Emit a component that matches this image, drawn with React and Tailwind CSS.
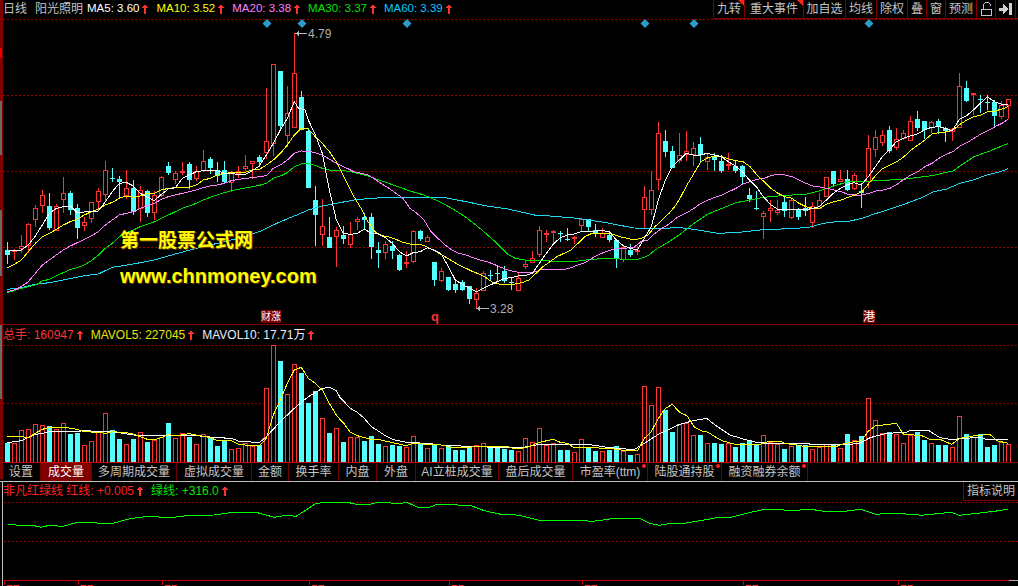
const RED = '#ff3232';
const CYAN = '#54ffff';
const DARK = '#800000';

// candles: [kind, bodyTop, bodyBottom, high, low], y read off the 3x crops
const candles = [
  ['c',420,434,396,462],['r',420,424,418,450],['r',408,413,376,430],['r',342,406,340,430],['r',294,326,286,350],
  ['r',256,286,240,310],['c',288,354,250,360],['r',288,360,282,362],['r',250,268,202,310],['c',249,300,243,316],
  ['c',294,353,282,387],['r',337,346,320,362],['r',277,326,275,340],['r',244,275,234,300],['r',181,253,153,272],
  ['c',203,205,174,215],['c',208,216,198,265],['r',234,255,181,266],['c',234,306,210,315],['r',240,293,228,335],
  ['c',243,309,240,320],['r',256,307,244,330],['r',202,256,198,262],['c',168,189,155,195],['r',190,208,182,222],
  ['r',182,184,155,195],['c',162,210,155,237],['r',184,205,168,214],['r',154,182,121,185],['c',147,175,142,192],
  ['c',181,200,156,215],['c',181,217,153,222],['r',190,217,183,247],['r',183,190,168,205],['r',169,175,136,182],
  ['r',154,160,154,208],['c',141,155,135,170],['r',94,128,-66,148],['r',-138,100,-138,138],['c',-117,48,-117,60],
  ['r',10,75,-72,110],['r',-111,52,-231,52],['c',-39,60,-58,60],['c',62,233,55,233],['c',270,315,228,408],
  ['r',349,374,268,408],['c',381,413,321,413],['r',361,380,350,472],
  ['c',375,386,348,402],['r',371,401,336,413],['r',328,334,322,360],['c',322,330,310,360],['c',322,413,310,446],
  ['c',420,428,396,473],['r',403,428,392,446],['c',408,422,392,446],['c',435,480,432,482],['r',456,458,424,473],
  ['r',364,455,360,460],['c',363,388,360,392],['r',382,394,376,396],['c',456,510,456,527],['r',484,510,475,515],
  ['c',501,540,501,542],['c',522,540,510,548],['c',517,540,510,542],['c',529,569,528,582],['r',550,568,535,595],
  ['r',490,540,484,540],['c',495,498,480,510],['c',489,491,468,515],['c',484,514,468,520],['c',517,521,505,540],
  ['r',503,538,490,540],['r',462,467,450,478],['r',443,455,424,460],['r',361,434,348,441],['r',369,372,360,396],
  ['r',364,365,360,402],['c',370,374,362,396],['c',387,389,354,392],['r',381,385,378,402],['r',328,347,327,364],
  ['c',328,353,327,364],['c',361,373,342,380],['r',369,380,355,380],['c',375,390,372,395],['c',391,445,391,473],
  ['r',410,445,405,456],['c',420,435,403,440],['r',420,422,408,436],['r',262,298,228,358],['r',241,298,183,315],
  ['r',70,208,36,240],['c',94,128,60,140],['c',123,174,108,174],['r',136,152,70,160],
];
const candles2 = [
  ['r',274,283,213,303],['r',265,284,246,318],['c',252,285,231,306],['r',292,305,280,330],['c',292,302,280,333],
  ['c',303,333,285,339],['r',311,314,280,330],['c',318,333,303,339],['c',318,351,315,372],['c',405,417,385,426],
  ['c',444,446,393,450],['r',460,470,453,537],['r',445,452,420,486],['r',451,458,420,465],['c',426,452,411,471],
  ['r',420,471,417,477],['c',448,471,445,480],['c',444,452,411,468],['r',438,486,426,504],['r',420,444,399,448],
  ['r',352,410,352,412],['c',334,373,334,378],['r',358,364,330,366],['c',357,390,331,393],['r',345,384,339,390],
  ['c',393,400,370,444],['r',265,365,225,385],['r',232,268,210,291],['r',225,245,210,258],['c',210,273,198,280],
  ['r',238,262,204,270],['r',220,236,210,240],['r',184,241,167,242],['c',178,204,153,213],['c',184,211,184,237],
  ['r',187,202,184,220],['c',184,202,178,222],['c',204,213,200,246],['r',208,213,205,243],['r',79,202,40,204],
  ['c',85,123,63,126],['r',100,104,100,166],['c',118,120,106,160],['c',125,127,105,150],['c',127,170,120,203],
  ['r',136,170,124,177],['r',118,136,118,177],
];

const allCandles = [
  ...candles.map((c) => [c[0], 110 + c[1] / 3, 110 + c[2] / 3, 110 + c[3] / 3, 110 + c[4] / 3]),
  ...candles2.map((c) => [c[0], 60 + c[1] / 3, 60 + c[2] / 3, 60 + c[3] / 3, 60 + c[4] / 3]),
];

// volume bars: r/c and the top in crop y
const volumes = 'c353 r355 r316 r313 r298 r300 c304 r313 r295 c327 c324 r361 r349 r322 r265 c316 c342 r358 c342 r322 c351 r345 r337 c294 r340 r325 c335 r358 r328 c338 c363 c347 r373 r370 r355 r363 c360 r190 r61 c108 r208 r118 c144 c234 c198 r280 c324 r310 c351 r337 r337 c348 c333 c357 r364 c360 c363 r367 r334 c358 r370 c358 r370 c363 c375 c375 c363 r361 r355 c367 c367 c372 c375 r379 r340 r352 r310 r361 r355 c375 c375 r382 r343 c367 c378 r379 c375 c363 r379 c390 r388 r184 r241 r187 c255 c321 r298 r295 r331 c330 r355 c354 c357 r355 c366 c354 c345 c357 r331 r352 r358 c372 r364 c360 c360 r373 r367 r358 c358 r370 c327 r346 c333 r220 r286 r325 c321 r327 r355 r331 c321 c345 r355 c360 c360 r367 r274 c327 r337 c328 c366 c360 r351 r358'
  .split(' ')
  .map((s) => [s[0], 325 + Number(s.slice(1)) / 3]);

const pts = (x0, y0, list) => list.map(([x, y]) => `${x0 + x / 3},${y0 + y / 3}`).join(' ');
const line = (...parts) => parts.join(' ');

const ma5 = line(
  pts(0, 110, [[22,425],[43,420],[64,420],[85,405],[106,378],[127,345],[148,310],[169,295],[190,290],[211,288],[232,308],[253,306],[274,305],[295,303],[316,275],[337,245],[358,220],[379,217],[400,228],[421,250],[442,262],[463,272],[484,253],[505,237],[526,233],[547,205],[568,195],[589,185],[610,182],[631,180],[652,182],[673,190],[694,191],[715,193],[736,193],[757,182],[778,168],[799,135],[820,100],[841,60],[862,25],[883,-25],[895,-6],[915,0],[925,30],[946,75],[967,130],[988,240],[1009,330]]),
  pts(340, 110, [[0,350],[10,370],[31,373],[52,370],[73,357],[94,370],[115,372],[136,383],[157,400],[178,425],[199,438],[220,428],[241,425],[262,413],[283,420],[304,432],[325,470],[346,510],[367,523],[388,535],[409,545],[430,535],[451,525],[472,515],[493,505],[514,503],[535,498],[556,497],[577,490],[598,460],[619,430],[640,402],[661,383],[682,375],[703,372],[724,365],[745,363],[766,363],[787,362],[808,365],[829,390],[850,407],[871,415],[892,420],[913,385],[934,350],[955,270],[976,210],[997,170]]),
  pts(680, 60, [[0,298],[19,280],[40,285],[61,285],[82,280],[103,285],[124,290],[145,305],[166,318],[187,335],[208,360],[229,380],[250,410],[271,433],[292,447],[313,450],[334,447],[355,447],[376,450],[397,445],[418,440],[439,420],[460,400],[481,385],[502,375],[523,368],[544,375],[565,350],[586,320],[607,290],[628,270],[649,245],[670,235],[691,228],[712,222],[733,210],[754,202],[775,200],[796,205],[817,212],[838,178],[859,168],[880,150],[901,130],[922,110],[943,125],[964,132],[985,135]]),
);
const ma10 = line(
  pts(0, 110, [[22,474],[43,463],[64,450],[85,425],[106,400],[127,380],[148,370],[169,358],[190,345],[211,335],[232,327],[253,315],[274,305],[295,297],[316,285],[337,277],[358,265],[379,258],[400,262],[421,258],[442,250],[463,250],[484,240],[505,235],[526,233],[547,233],[568,232],[589,225],[610,210],[631,205],[652,195],[673,190],[694,188],[715,187],[736,187],[757,180],[778,178],[799,165],[820,150],[841,130],[862,105],[883,75],[904,55],[925,57],[946,80],[967,100],[988,125],[1009,155]]),
  pts(340, 110, [[0,178],[21,220],[42,260],[63,295],[84,335],[105,365],[126,377],[147,381],[168,388],[189,397],[210,402],[231,402],[252,406],[273,417],[294,428],[315,440],[336,453],[357,465],[378,475],[399,485],[420,493],[441,505],[462,520],[483,523],[504,525],[525,522],[546,518],[567,510],[588,490],[609,470],[630,455],[651,440],[672,430],[693,420],[714,400],[735,380],[756,370],[777,370],[798,370],[819,373],[840,380],[861,385],[882,390],[903,385],[924,375],[945,350],[966,330],[987,310],[1008,285]]),
  pts(680, 60, [[0,415],[21,375],[42,340],[63,305],[84,293],[105,288],[126,290],[147,297],[168,302],[189,305],[210,320],[231,345],[252,365],[273,385],[294,400],[315,410],[336,415],[357,430],[378,440],[399,445],[420,444],[441,432],[462,425],[483,420],[504,412],[525,405],[546,395],[567,370],[588,345],[609,325],[630,315],[651,305],[672,290],[693,270],[714,255],[735,240],[756,222],[777,218],[798,216],[819,210],[840,193],[861,180],[882,170],[903,165],[924,155],[945,153],[966,147],[985,140]]),
);
const ma20 = line(
  pts(0, 110, [[22,545],[43,540],[64,530],[85,515],[106,490],[127,465],[148,450],[169,435],[190,420],[211,408],[232,398],[253,388],[274,378],[295,365],[316,345],[337,330],[358,315],[379,310],[400,305],[421,295],[442,287],[463,280],[484,268],[505,260],[526,255],[547,250],[568,245],[589,240],[610,233],[631,228],[652,225],[673,220],[694,212],[715,208],[736,205],[757,203],[778,200],[799,197],[820,175],[841,165],[862,150],[883,130],[904,123],[925,124],[946,128],[967,135],[988,147],[1009,160]]),
  pts(340, 110, [[0,165],[21,175],[42,185],[63,190],[84,195],[105,208],[126,222],[147,235],[168,250],[189,265],[210,295],[231,310],[252,330],[273,365],[294,385],[315,405],[336,420],[357,430],[378,435],[399,443],[420,450],[441,455],[462,463],[483,472],[504,480],[525,485],[546,488],[567,488],[588,485],[609,477],[630,477],[651,478],[672,479],[693,473],[714,465],[735,458],[756,445],[777,433],[798,425],[819,418],[840,415],[861,414],[882,412],[903,395],[924,390],[945,370],[966,355],[987,342],[1008,325]]),
  pts(680, 60, [[0,468],[21,458],[42,445],[63,430],[84,420],[105,412],[126,405],[147,395],[168,385],[189,372],[210,365],[231,358],[252,355],[273,347],[294,343],[315,345],[336,350],[357,360],[378,370],[399,378],[420,381],[441,385],[462,390],[483,395],[504,403],[525,405],[546,405],[567,400],[588,393],[609,390],[630,385],[651,373],[672,358],[693,345],[714,335],[735,320],[756,310],[777,295],[798,283],[819,275],[840,258],[861,248],[882,235],[903,222],[924,212],[945,200],[966,190],[985,177]]),
);
const ma30 = line(
  pts(0, 110, [[22,547],[43,542],[64,535],[85,530],[106,525],[127,513],[148,508],[169,497],[190,488],[211,478],[232,473],[253,465],[274,452],[295,435],[316,415],[337,400],[358,380],[379,368],[400,360],[421,350],[442,343],[463,335],[484,325],[505,315],[526,305],[547,295],[568,288],[589,280],[610,270],[631,262],[652,255],[673,248],[694,242],[715,238],[736,234],[757,230],[778,226],[799,220],[820,205],[841,198],[862,188],[883,170],[904,162],[925,161],[946,166],[967,175],[988,180]]),
  pts(340, 110, [[0,180],[42,187],[84,198],[126,213],[168,228],[210,243],[252,255],[294,273],[336,295],[378,322],[420,355],[462,392],[483,412],[504,433],[525,445],[567,452],[609,452],[672,455],[714,453],[756,448],[798,445],[861,448],[893,449],[925,437],[945,420],[987,395]]),
  pts(680, 60, [[0,523],[42,490],[84,462],[126,445],[168,428],[210,420],[252,412],[294,408],[336,405],[378,403],[420,392],[462,378],[504,365],[546,366],[588,362],[630,360],[672,358],[714,352],[756,347],[798,337],[819,333],[840,318],[882,290],[924,275],[966,258],[985,250]]),
);
const ma60 = line(
  pts(0, 110, [[22,538],[64,533],[106,523],[148,518],[190,510],[253,497],[295,492],[337,472],[400,462],[463,450],[526,432],[589,415],[652,400],[715,385],[778,365],[841,335],[883,318],[925,300],[967,288]]),
  pts(340, 110, [[0,278],[42,270],[84,266],[126,263],[210,262],[252,262],[315,263],[378,275],[441,288],[504,297],[588,316],[630,318],[714,325],[798,338],[882,354],[960,355]]),
  pts(680, 60, [[0,503],[42,508],[84,515],[115,520],[178,517],[240,510],[303,507],[345,505],[387,502],[430,490],[470,485],[510,483],[546,475],[580,463],[630,447],[680,430],[720,415],[760,395],[800,387],[840,370],[880,360],[920,345],[960,335],[985,326]]),
);

const volMa5 = line(
  pts(0, 325, [[22,335],[64,335],[85,338],[106,325],[127,313],[148,307],[190,306],[232,313],[253,320],[295,322],[316,325],[337,320],[379,323],[400,327],[421,335],[442,343],[463,344],[484,338],[505,328],[526,333],[567,326],[589,330],[631,338],[652,347],[694,347],[715,357],[736,360],[778,363],[799,340],[820,270],[841,225],[862,175],[883,135],[904,127],[925,160],[946,175],[967,195],[988,235],[1009,270]]),
  pts(340, 325, [[0,283],[10,293],[31,322],[52,332],[73,338],[94,343],[115,343],[136,348],[157,353],[199,362],[220,355],[262,358],[304,360],[335,367],[378,368],[400,365],[504,365],[525,372],[546,370],[567,365],[598,352],[640,343],[661,352],[682,355],[703,368],[745,368],[808,370],[850,376],[892,378],[913,340],[934,320],[955,280],[976,250],[997,238]]),
  pts(680, 325, [[0,263],[21,272],[42,305],[63,317],[84,322],[105,335],[126,347],[165,358],[240,358],[264,350],[305,350],[315,356],[340,358],[370,364],[470,364],[495,355],[545,347],[565,318],[586,303],[640,296],[650,296],[670,327],[725,332],[750,343],[780,343],[815,358],[840,340],[880,333],[930,328],[950,347],[985,355]]),
);
const volMa10 = line(
  pts(0, 325, [[22,353],[64,347],[106,328],[127,325],[148,320],[232,320],[253,316],[295,320],[337,320],[400,330],[463,332],[526,332],[589,332],[652,338],[694,340],[715,348],[778,353],[799,335],[841,290],[883,250],[925,215],[967,190],[988,187],[1009,197]]),
  pts(340, 325, [[0,217],[31,250],[52,262],[73,280],[94,305],[115,318],[136,332],[157,343],[199,352],[262,355],[304,360],[356,362],[378,365],[504,367],[546,368],[588,360],[640,358],[756,360],[808,368],[882,374],[913,355],[955,328]]),
  pts(680, 325, [[0,298],[40,287],[80,280],[105,300],[150,330],[190,342],[230,352],[262,355],[385,355],[390,358],[490,360],[540,355],[570,338],[620,325],[680,322],[690,316],[745,316],[780,338],[820,345],[840,340],[900,338],[925,345],[985,343]]),
);
const greenLine = line(
  pts(0, 455, [[22,208],[55,211],[95,211],[120,217],[145,211],[185,214],[230,202],[285,202],[290,205],[335,205],[380,193],[412,187],[455,184],[500,189],[565,181],[640,180],[695,172],[765,172],[820,187],[855,181],[885,184],[915,165],[945,145],[980,142],[1040,142],[1065,148],[1105,148],[1130,142],[1190,145],[1220,143],[1250,157],[1285,157],[1310,147],[1410,152],[1450,167],[1500,178]]),
  pts(510, 455, [[0,178],[30,182],[85,196],[200,196],[245,199],[290,193],[315,190],[385,190],[415,205],[445,211],[480,205],[520,205],[625,187],[660,187],[720,172],[760,163],[850,166],[900,163],[940,169],[1000,169],[1050,163],[1095,178],[1130,175],[1210,178],[1230,181],[1320,172],[1345,181],[1450,169],[1490,163]]),
);

const toolbar = [
  { label: '九转', w: 'w-[31px]', corner: true },
  { label: '重大事件', w: 'w-[59px]', corner: true },
  { label: '加自选', w: 'w-[42px]' },
  { label: '均线', w: 'w-[31px]' },
  { label: '除权', w: 'w-[31px]' },
  { label: '叠', w: 'w-[19px]' },
  { label: '窗', w: 'w-[19px]' },
  { label: '预测', w: 'w-[31px]' },
];

const tabs = [
  { label: '设置', w: 'w-[39px]' },
  { label: '成交量', w: 'w-[51px]', active: true },
  { label: '多周期成交量', w: 'w-[85px]' },
  { label: '虚拟成交量', w: 'w-[75px]' },
  { label: '金额', w: 'w-[37px]' },
  { label: '换手率', w: 'w-[50px]' },
  { label: '内盘', w: 'w-[38px]' },
  { label: '外盘', w: 'w-[39px]' },
  { label: 'AI立桩成交量', w: 'w-[83px]' },
  { label: '盘后成交量', w: 'w-[74px]' },
  { label: '市盈率(ttm)', w: 'w-[75px]', dot: true },
  { label: '陆股通持股', w: 'w-[74px]', dot: true },
  { label: '融资融券余额', w: 'w-[86px]', dot: true },
];

const dates = [
  { x: 3, label: '77' },
  { x: 77, label: '75' },
  { x: 161, label: '75' },
  { x: 308, label: '57' },
  { x: 448, label: '75' },
  { x: 581, label: '77' },
  { x: 742, label: '77' },
  { x: 897, label: '75' },
];

const edge = [
  [0, 48, DARK], [48, 10, '#e00000'], [58, 43, DARK], [101, 54, '#6a6a6a'], [155, 55, DARK],
  [210, 66, '#6a6a6a'], [276, 48, DARK], [325, 75, '#6a6a6a'], [400, 80, DARK],
];

function UpArrow() {
  return (
    <svg width="6" height="10" viewBox="0 0 6 10" shapeRendering="crispEdges" className="shrink-0">
      <polygon points="3,0 6,4 4,4 4,10 2,10 2,4 0,4" fill={RED} />
    </svg>
  );
}

function Value({ label, className }) {
  return (
    <div className={`flex items-center gap-[3px] ${className}`}>
      <span className="whitespace-nowrap">{label}</span>
      <UpArrow />
    </div>
  );
}

function Dotted({ y }) {
  return <line x1="3" x2="1018" y1={y + 0.5} y2={y + 0.5} stroke="#a00000" strokeDasharray="2 2" />;
}

function MainChart() {
  return (
    <svg width="1018" height="306" viewBox="0 19 1018 306" shapeRendering="crispEdges" className="block">
      <Dotted y={19} />
      <Dotted y={95} />
      <Dotted y={171} />
      <Dotted y={247} />
      {[267, 302, 407, 645, 694, 869].map((x) => (
        <polygon key={x} points={`${x},19 ${x + 4.5},23.5 ${x},28 ${x - 4.5},23.5`} fill="#2f9ac6" shapeRendering="auto" />
      ))}
      {allCandles.map(([kind, top, bottom, hi, lo], i) => {
        const cx = 7.5 + 7 * i;
        const color = kind === 'r' ? RED : CYAN;
        return (
          <g key={i}>
            <line x1={cx} x2={cx} y1={hi} y2={lo} stroke={color} />
            {kind === 'r' ? (
              <rect x={cx - 2} y={Math.round(top) + 0.5} width="4" height={Math.max(1, Math.round(bottom - top))} fill="#000" stroke={color} />
            ) : (
              <rect x={cx - 2.5} y={Math.round(top)} width="5" height={Math.max(1, Math.round(bottom - top))} fill={color} />
            )}
          </g>
        );
      })}
      <polyline points={ma60} fill="none" stroke="#1fd6f2" />
      <polyline points={ma30} fill="none" stroke="#00e000" />
      <polyline points={ma20} fill="none" stroke="#ff80ff" />
      <polyline points={ma10} fill="none" stroke="#ffff00" />
      <polyline points={ma5} fill="none" stroke="#ffffff" />
      <line x1="296" x2="307" y1="33.5" y2="33.5" stroke="#b8b8b8" />
      <polygon points="295,33.5 299,31 299,36" fill="#b8b8b8" />
      <line x1="477" x2="489" y1="308.5" y2="308.5" stroke="#b8b8b8" />
      <polygon points="476,308.5 480,306 480,311" fill="#b8b8b8" />
    </svg>
  );
}

function VolumeChart() {
  return (
    <svg width="1018" height="120" viewBox="0 342 1018 120" shapeRendering="crispEdges" className="block">
      <Dotted y={345} />
      <Dotted y={403} />
      {volumes.map(([kind, top], i) => {
        const x = 5 + 7 * i;
        const y = Math.round(top);
        return kind === 'r' ? (
          <rect key={i} x={x + 0.5} y={y + 0.5} width="4" height={462 - y} fill="#000" stroke={RED} />
        ) : (
          <rect key={i} x={x} y={y} width="5" height={462 - y} fill={CYAN} />
        );
      })}
      <polyline points={volMa10} fill="none" stroke="#ffffff" />
      <polyline points={volMa5} fill="none" stroke="#ffff00" />
    </svg>
  );
}

function SubChart() {
  return (
    <svg width="1016" height="86" viewBox="2 500 1016 86" shapeRendering="crispEdges" className="block">
      <Dotted y={502} />
      <Dotted y={541} />
      <polyline points={greenLine} fill="none" stroke="#00ff00" />
      <line x1="3" x2="1008" y1="580.5" y2="580.5" stroke="#c80000" />
      <line x1="1008" x2="1018" y1="580.5" y2="580.5" stroke="#b0b0b0" />
      {dates.map((d) => (
        <line key={d.x} x1={d.x + 0.5} x2={d.x + 0.5} y1="581" y2="585" stroke="#c80000" />
      ))}
    </svg>
  );
}

export default function App() {
  return (
    <div className="relative flex h-[586px] w-[1018px] flex-col overflow-hidden bg-black font-['Liberation_Sans','Noto_Sans_CJK_SC',sans-serif] text-[12px] leading-none">
      {/* left axis strip */}
      <div className="absolute left-0 top-0 flex h-[480px] w-[3px] flex-col border-r border-[#800000]">
        {edge.map(([y, h, color]) => (
          <div key={y} className="w-full shrink-0" style={{ height: h, backgroundColor: color }} />
        ))}
      </div>

      {/* main pane */}
      <section className="relative h-[325px] shrink-0">
        <header className="flex h-[19px] items-start">
          <div className="flex h-[18px] items-center pl-[3px]">
            <span className="text-[#c4c4c4]">日线</span>
            <span className="ml-[8px] text-[#c4c4c4]">阳光照明</span>
            <div className="ml-[4px] flex gap-2 text-[11.5px]">
              <Value label="MA5: 3.60" className="text-white" />
              <Value label="MA10: 3.52" className="text-[#ffff00]" />
              <Value label="MA20: 3.38" className="text-[#ff80ff]" />
              <Value label="MA30: 3.37" className="text-[#00e600]" />
              <Value label="MA60: 3.39" className="text-[#00ccff]" />
            </div>
          </div>
          <div className="ml-auto flex h-[19px] border-b border-l border-[#800000]">
            {toolbar.map((t) => (
              <div key={t.label} className={`relative flex items-center justify-center border-r border-[#800000] text-[#c4c4c4] ${t.w}`}>
                {t.label}
                {t.corner && <div className="absolute right-0 top-0 h-[6px] w-[6px] bg-[#ff2020] [clip-path:polygon(0_0,100%_0,100%_100%)]" />}
              </div>
            ))}
            <div className="flex w-[19px] items-center justify-center border-r border-[#800000]">
              <svg width="13" height="16" viewBox="0 0 13 16" fill="none" stroke="#c4c4c4" shapeRendering="crispEdges">
                <path d="M1.5 8.5h10v6h-10zM3.5 8V3.5l2-2h3l2 2V5" />
              </svg>
            </div>
            <div className="flex w-[20px] items-center justify-center border-r border-[#800000]">
              <svg width="13" height="12" viewBox="0 0 13 12" fill="#d0d0d0" shapeRendering="crispEdges">
                <path d="M0 4.5h4V0l5 6-5 6V7.5H0zM10 0h3v12h-3z" />
              </svg>
            </div>
            <div className="w-[2px]" />
          </div>
        </header>
        <MainChart />
        {/* watermark and price labels sit over the chart */}
        <div className="absolute left-[120px] top-[231px] text-[19px] font-bold text-[#ffff00] [text-shadow:1px_1px_0_#6b3a00]">第一股票公式网</div>
        <div className="absolute left-[120px] top-[266px] text-[20px] font-bold text-[#ffff00] [text-shadow:1px_1px_0_#6b3a00]">www.chnmoney.com</div>
        <div className="absolute left-[308px] top-[28px] text-[12px] text-[#b0b0b0]">4.79</div>
        <div className="absolute left-[490px] top-[303px] text-[12px] text-[#b0b0b0]">3.28</div>
        <div className="absolute left-[261px] top-[310px] flex h-[13px] w-[20px] items-center justify-center overflow-hidden whitespace-nowrap bg-[#800000] text-[10px] text-white">财涨</div>
        <div className="absolute left-[431px] top-[310px] text-[13px] font-bold text-[#ff3232]">q</div>
        <div className="absolute left-[863px] top-[310px] flex h-[13px] w-[12px] items-center justify-center bg-[#800000] text-[12px] text-white">港</div>
        <div className="absolute bottom-0 left-0 h-px w-full bg-[#8c0000]" />
      </section>

      {/* volume pane */}
      <section className="h-[138px] shrink-0">
        <header className="flex h-[17px] items-center gap-[8px] pl-[3px] pt-[2px]">
          <Value label="总手: 160947" className="text-[#ff3232]" />
          <Value label="MAVOL5: 227045" className="text-[#e6e600]" />
          <Value label="MAVOL10: 17.71万" className="text-[#e8f0ff]" />
        </header>
        <VolumeChart />
        <div className="flex h-px">
          <div className="w-[808px] bg-[#d00000]" />
          <div className="flex-1 bg-[#800000]" />
        </div>
      </section>

      {/* tabs */}
      <nav className="flex h-[19px] shrink-0 border-b border-[#c0c0c0] pl-[2px]">
        {tabs.map((t) => (
          <div
            key={t.label}
            className={`relative flex items-center justify-center border-r border-[#700000] ${t.w} ${t.active ? 'bg-[#800000] text-white' : 'text-[#c4c4c4]'}`}
          >
            {t.label}
            {t.dot && <div className="absolute right-[1px] top-[1px] h-[4px] w-[4px] rounded-full bg-[#ff2020]" />}
          </div>
        ))}
      </nav>

      {/* sub pane */}
      <section className="relative flex-1 pl-[2px]">
        <div className="h-full border-l border-[#c0c0c0]">
          <header className="flex h-[18px] items-start">
            <div className="flex h-[18px] items-center gap-[8px]">
              <Value label="非凡红绿线 红线: +0.005" className="text-[#ff2020]" />
              <Value label="绿线: +316.0" className="text-[#00e600]" />
            </div>
            <div className="ml-auto flex h-[19px] w-[55px] items-center justify-center border-b border-l border-[#800000] text-[#c4c4c4]">指标说明</div>
          </header>
          <SubChart />
        </div>
        {dates.map((d) => (
          <span key={d.x} className="absolute top-[102px] text-[12px] text-[#ff3232]" style={{ left: d.x + 3 }}>
            {d.label}
          </span>
        ))}
      </section>
    </div>
  );
}
